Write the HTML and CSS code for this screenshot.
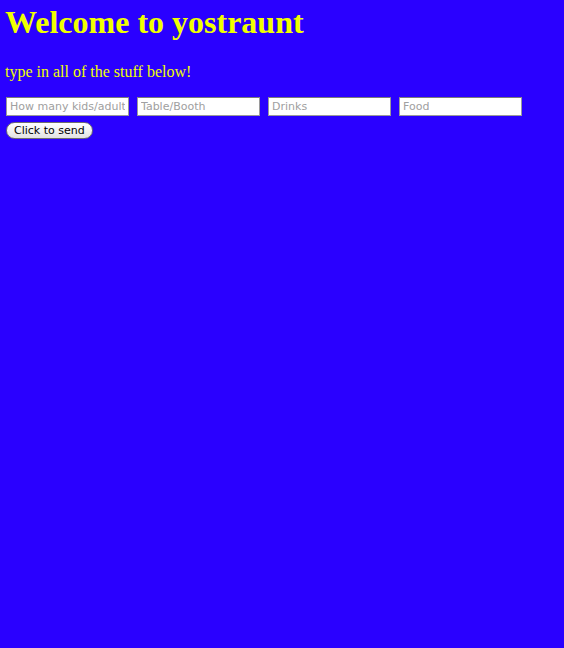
FILE: index.html
```html
<!DOCTYPE html>
<html>
<head>
<meta charset="utf-8">
<link rel="stylesheet" href="styles.css">
</head>
<body>
<h1 class="title">Welcome to yostraunt</h1>
<p class="intro">type in all of the stuff below!</p>
<form class="order">
  <div class="fields">
    <input class="field" type="text" placeholder="How many kids/adults">
    <input class="field" type="text" placeholder="Table/Booth">
    <input class="field" type="text" placeholder="Drinks">
    <input class="field" type="text" placeholder="Food">
  </div>
  <button class="send" type="button">Click to send</button>
</form>
</body>
</html>
```
FILE: styles.css
```css
html, body {
  margin: 0;
  padding: 0;
  background: #2a00ff;
  height: 100%;
}
body {
  padding: 0 5px;
  font-family: "Liberation Serif", "Times New Roman", serif;
  color: #f0ff00;
}
.title {
  margin: 0;
  padding-top: 4px;
  font-size: 32px;
  line-height: 37px;
  font-weight: bold;
}
.intro {
  margin: 21px 0 0 0;
  font-size: 16px;
  line-height: 20px;
}
.order {
  margin-top: 15px;
  display: flex;
  flex-direction: column;
  align-items: flex-start;
  gap: 6px;
  padding-left: 1px;
}
.fields {
  display: flex;
  gap: 8px;
}
.field {
  width: 123px;
  height: 19px;
  box-sizing: border-box;
  margin: 0;
  padding: 1px 3px;
  border: 1px solid #9a9a9a;
  border-top-color: #7a7a7a;
  background: #fff;
  font-family: "DejaVu Sans", sans-serif;
  font-size: 11px;
  color: #000;
  outline: none;
}
.field::placeholder {
  color: #a0a0a0;
}
.send {
  height: 17px;
  box-sizing: border-box;
  margin: 0;
  padding: 0 7px;
  border: 1px solid #6f6f6f;
  border-radius: 9px;
  background: linear-gradient(#ffffff, #f2f2f2 50%, #e2e2e2);
  font-family: "DejaVu Sans", sans-serif;
  font-size: 11px;
  line-height: 15px;
  color: #000;
}
```
